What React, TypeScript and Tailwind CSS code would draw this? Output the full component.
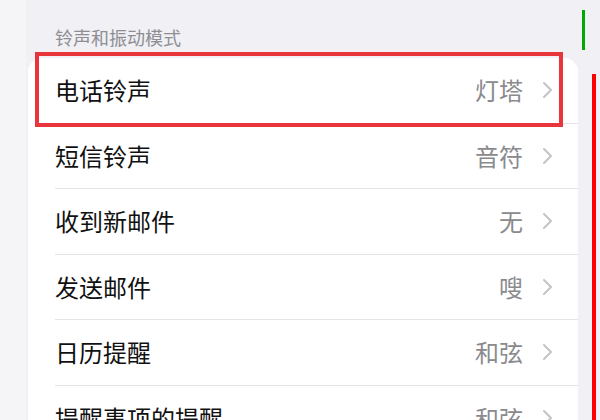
import React from 'react'

const rows = [
  { label: '电话铃声', value: '灯塔' },
  { label: '短信铃声', value: '音符' },
  { label: '收到新邮件', value: '无' },
  { label: '发送邮件', value: '嗖' },
  { label: '日历提醒', value: '和弦' },
  { label: '提醒事项的提醒', value: '和弦' },
]

function Chevron() {
  return (
    <svg width="11" height="18" viewBox="0 0 11 18" className="shrink-0">
      <path d="M2 2 L9 9 L2 16" fill="none" stroke="#c4c4c8" strokeWidth="2" strokeLinecap="round" strokeLinejoin="round" />
    </svg>
  )
}

export default function App() {
  return (
    <div
      className="relative w-[600px] h-[420px] overflow-hidden bg-[#f0f0f5] flex"
      style={{ fontFamily: '"Noto Sans CJK SC", "Noto Sans", sans-serif' }}
    >
      <div className="w-[26px] shrink-0 bg-[#f5f5f7]" />

      <div className="w-[552px] h-[420px] shrink-0 pl-[2px] overflow-hidden">
        <div className="h-[58px] pl-[27px] pt-[25px] text-[18px] leading-[24px] text-[#8e8e93]">
          铃声和振动模式
        </div>
        <div className="bg-white rounded-[14px]">
          {rows.map(r => (
            <div key={r.label} className="pl-[27px]">
              <div className="h-[65.5px] flex items-center pr-[25px] border-b border-[#e4e4e8]">
                <span className="text-[24px] text-[#111]">{r.label}</span>
                <span className="ml-auto text-[24px] text-[#8a8a8e]">{r.value}</span>
                <span className="ml-[19px]"><Chevron /></span>
              </div>
            </div>
          ))}
        </div>
      </div>

      <div className="w-[22px] h-[420px] shrink-0 pl-[14px] pt-[74px]">
        <div className="w-[4px] h-full bg-[#ff0000]" />
      </div>

      <div className="absolute left-[35px] top-[52px] w-[528px] h-[75px] border-[4px] border-[#e8353b]" />
      <div className="absolute left-[582px] top-[10px] w-[3px] h-[40px] bg-[#00aa00]" />
    </div>
  )
}
